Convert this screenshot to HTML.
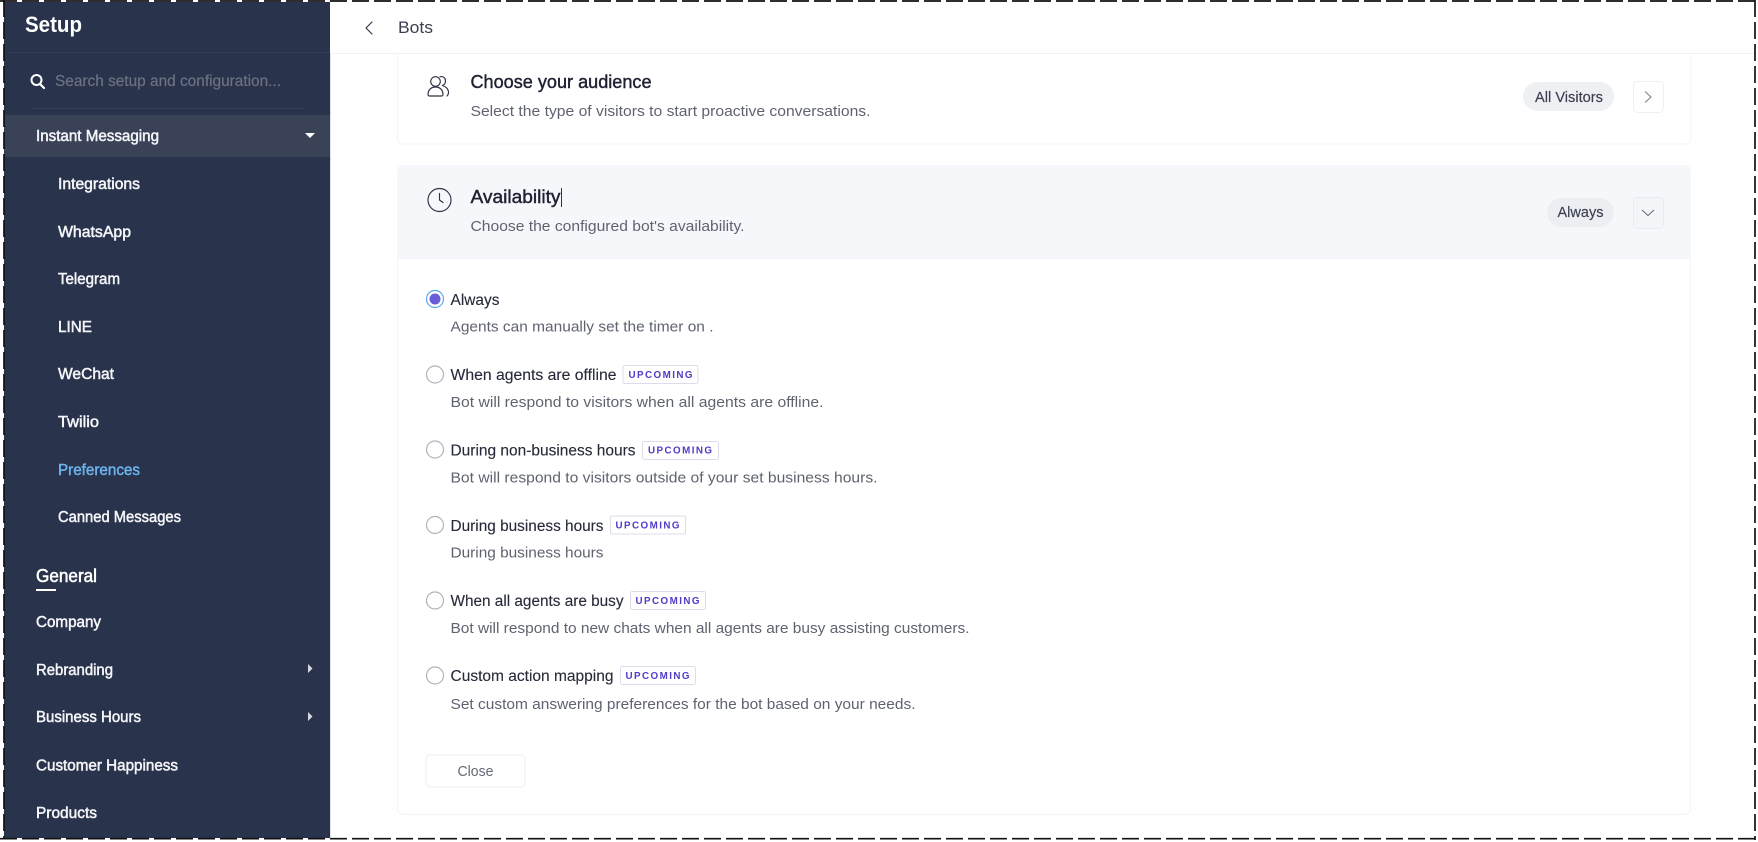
<!DOCTYPE html>
<html lang="en"><head><meta charset="utf-8"><title>Bots - Setup</title>
<style>
html,body{margin:0;padding:0;background:#fff;width:1758px;height:842px;overflow:hidden}
svg{display:block;filter:blur(.3px)}
text{font-family:"Liberation Sans",sans-serif}
.nav{fill:#f4f5f8;font-size:15.5px;stroke:#f4f5f8;stroke-width:.5px}
.lab{fill:#262a38;font-size:15.5px;stroke:#262a38;stroke-width:.12px}
.sub{fill:#5f6370;font-size:15px}
.ttl{fill:#1d2130;font-size:18px;stroke:#1d2130;stroke-width:.4px}
.pill{fill:#3a3e4e;font-size:14.5px;stroke:#3a3e4e;stroke-width:.15px}
.bdg{fill:#4f3cc9;font-size:9.8px;font-weight:700}
.ic{fill:none;stroke:#2e3242;stroke-width:1.15;stroke-linecap:round;stroke-linejoin:round}
.bb{fill:#fff;stroke:#dcdcea}
</style></head><body>
<svg width="1758" height="842" viewBox="0 0 1758 842" xmlns="http://www.w3.org/2000/svg">
<rect width="1758" height="842" fill="#fff"/>
<!-- sidebar -->
<rect x="4" y="2" width="326" height="836" fill="#2a334c"/>
<rect x="330" y="53" width="1" height="785" fill="#dfe2e8"/>
<rect x="4" y="52" width="326" height="1" fill="#313a53"/>
<text x="25" y="32" font-size="22" font-weight="700" fill="#fff" textLength="57" lengthAdjust="spacingAndGlyphs">Setup</text>
<circle cx="36.500" cy="80" r="5" fill="none" stroke="#fff" stroke-width="2"/><path d="M40 84l4 4" stroke="#fff" stroke-width="2.200" stroke-linecap="round"/>
<text x="55" y="86" font-size="15.500" fill="#6c7282" stroke="#6c7282" stroke-width=".2" textLength="226" lengthAdjust="spacingAndGlyphs">Search setup and configuration...</text>
<rect x="32" y="108" width="271" height="1" fill="#38415a"/>
<rect x="4" y="115" width="326" height="42" fill="#3a4257"/>
<text class="nav" x="36" y="141" textLength="123" lengthAdjust="spacingAndGlyphs">Instant Messaging</text>
<path d="M305 133h10l-5 5z" fill="#fff"/>
<text class="nav" x="58" y="189" textLength="82" lengthAdjust="spacingAndGlyphs">Integrations</text>
<text class="nav" x="58" y="237" textLength="73" lengthAdjust="spacingAndGlyphs">WhatsApp</text>
<text class="nav" x="58" y="284" textLength="62" lengthAdjust="spacingAndGlyphs">Telegram</text>
<text class="nav" x="58" y="332" textLength="34" lengthAdjust="spacingAndGlyphs">LINE</text>
<text class="nav" x="58" y="379" textLength="56" lengthAdjust="spacingAndGlyphs">WeChat</text>
<text class="nav" x="58" y="427" textLength="41" lengthAdjust="spacingAndGlyphs">Twilio</text>
<text x="58" y="475" font-size="15.500" fill="#6bb3ee" stroke="#6bb3ee" stroke-width=".45" textLength="82" lengthAdjust="spacingAndGlyphs">Preferences</text>
<text class="nav" x="58" y="522" textLength="123" lengthAdjust="spacingAndGlyphs">Canned Messages</text>
<text x="36" y="582" font-size="18" fill="#fff" stroke="#fff" stroke-width=".55" textLength="61" lengthAdjust="spacingAndGlyphs">General</text>
<rect x="36" y="589" width="20" height="2" fill="#fff"/>
<text class="nav" x="36" y="627" textLength="65" lengthAdjust="spacingAndGlyphs">Company</text>
<text class="nav" x="36" y="675" textLength="77" lengthAdjust="spacingAndGlyphs">Rebranding</text>
<text class="nav" x="36" y="722" textLength="105" lengthAdjust="spacingAndGlyphs">Business Hours</text>
<text class="nav" x="36" y="770.500" textLength="142" lengthAdjust="spacingAndGlyphs">Customer Happiness</text>
<text class="nav" x="36" y="818" textLength="61" lengthAdjust="spacingAndGlyphs">Products</text>
<path d="M308 664v9l4.500-4.500z" fill="#d5d8e0"/>
<path d="M308 712v9l4.500-4.500z" fill="#d5d8e0"/>
<!-- top bar -->
<rect x="331" y="53" width="1424" height="1" fill="#f0f2f6"/>
<path d="M372 22l-6 6 6 6" class="ic"/>
<text x="398" y="33" font-size="17" fill="#3a3e4e" textLength="35" lengthAdjust="spacingAndGlyphs">Bots</text>
<!-- card 1 -->
<path d="M397.500 54V138a6 6 0 0 0 6 6H1685a6 6 0 0 0 6-6V54" fill="#fff" stroke="#f3f4f8"/>
<g class="ic" transform="translate(427 76)">
<circle cx="8.500" cy="5.500" r="4.800"/>
<path d="M1 18.500c0-4.500 3-7.500 7.500-7.500s7.500 3 7.500 7.500c0 1-.8 1.500-1.800 1.500H2.800c-1 0-1.800-.5-1.800-1.500z"/>
<path d="M13 .8c3-.8 5.500 1.200 5.500 4.200 0 2.200-1.300 3.800-3 4.500 3.300 1 6 3.500 6 7 0 1.500-.7 2.800-1.500 3.500"/>
</g>
<text class="ttl" x="470.500" y="88" textLength="181" lengthAdjust="spacingAndGlyphs">Choose your audience</text>
<text class="sub" x="470.500" y="116" textLength="400" lengthAdjust="spacingAndGlyphs">Select the type of visitors to start proactive conversations.</text>
<rect x="1523" y="82" width="91" height="29" rx="14.500" fill="#eef0f4"/>
<text class="pill" x="1535" y="102" textLength="68" lengthAdjust="spacingAndGlyphs">All Visitors</text>
<rect x="1633.500" y="81.500" width="30" height="31" rx="4" fill="#fff" stroke="#eef0f5"/>
<path d="M1645 91.500l6 5.500-6 5.500" fill="none" stroke="#80848f" stroke-width="1.100"/>
<!-- card 2 -->
<rect x="397.500" y="165.500" width="1293" height="649" rx="6" fill="#fff" stroke="#f3f4f8"/>
<path d="M397 259V171a6 6 0 0 1 6-6H1685a6 6 0 0 1 6 6V259z" fill="#f6f7fb"/>
<rect x="397" y="258" width="1294" height="1" fill="#f2f3f7"/>
<g class="ic"><circle cx="439.500" cy="200" r="11.500"/><path d="M439.500 193.500v6.500l3.500 2.500"/></g>
<text class="ttl" x="470.500" y="203" textLength="90" lengthAdjust="spacingAndGlyphs">Availability</text>
<rect x="561" y="188" width="1" height="19" fill="#2e3242"/>
<text class="sub" x="470.500" y="231" textLength="274" lengthAdjust="spacingAndGlyphs">Choose the configured bot's availability.</text>
<rect x="1547" y="198" width="67" height="29" rx="14.500" fill="#eceef2"/>
<text class="pill" x="1557.500" y="217" textLength="46" lengthAdjust="spacingAndGlyphs">Always</text>
<rect x="1633.500" y="197.500" width="30" height="31" rx="4" fill="#f4f5f9" stroke="#e9ebf0"/>
<path d="M1642 210l6 5.500 6-5.500" fill="none" stroke="#6a6e7b" stroke-width="1.100"/>
<!-- options -->
<circle cx="435" cy="299" r="8.500" fill="#fff" stroke="#5aa7ee" stroke-width="1.200"/><circle cx="435" cy="299" r="5.500" fill="#6a5cd8"/>
<text class="lab" x="450.500" y="305" textLength="49" lengthAdjust="spacingAndGlyphs">Always</text>
<text class="sub" x="450.500" y="331.500" textLength="263" lengthAdjust="spacingAndGlyphs">Agents can manually set the timer on .</text>

<circle cx="435" cy="374.500" r="8.500" fill="#fff" stroke="#b0b3bc" stroke-width="1.200"/>
<text class="lab" x="450.500" y="380" textLength="166" lengthAdjust="spacingAndGlyphs">When agents are offline</text>
<rect class="bb" x="623" y="365.500" width="75" height="18" rx="2"/>
<text class="bdg" x="628.500" y="378" textLength="64" lengthAdjust="spacing">UPCOMING</text>
<text class="sub" x="450.500" y="407" textLength="373" lengthAdjust="spacingAndGlyphs">Bot will respond to visitors when all agents are offline.</text>

<circle cx="435" cy="449.500" r="8.500" fill="#fff" stroke="#b0b3bc" stroke-width="1.200"/>
<text class="lab" x="450.500" y="455.500" textLength="185" lengthAdjust="spacingAndGlyphs">During non-business hours</text>
<rect class="bb" x="642.500" y="441.500" width="76" height="18" rx="2"/>
<text class="bdg" x="648" y="453.500" textLength="64" lengthAdjust="spacing">UPCOMING</text>
<text class="sub" x="450.500" y="482.500" textLength="427" lengthAdjust="spacingAndGlyphs">Bot will respond to visitors outside of your set business hours.</text>

<circle cx="435" cy="525" r="8.500" fill="#fff" stroke="#b0b3bc" stroke-width="1.200"/>
<text class="lab" x="450.500" y="531" textLength="153" lengthAdjust="spacingAndGlyphs">During business hours</text>
<rect class="bb" x="610.500" y="516" width="75" height="18" rx="2"/>
<text class="bdg" x="615.500" y="528.500" textLength="64" lengthAdjust="spacing">UPCOMING</text>
<text class="sub" x="450.500" y="557.500" textLength="153" lengthAdjust="spacingAndGlyphs">During business hours</text>

<circle cx="435" cy="600.500" r="8.500" fill="#fff" stroke="#b0b3bc" stroke-width="1.200"/>
<text class="lab" x="450.500" y="606" textLength="173" lengthAdjust="spacingAndGlyphs">When all agents are busy</text>
<rect class="bb" x="630.500" y="591.500" width="75" height="18" rx="2"/>
<text class="bdg" x="635.500" y="604" textLength="64" lengthAdjust="spacing">UPCOMING</text>
<text class="sub" x="450.500" y="633" textLength="519" lengthAdjust="spacingAndGlyphs">Bot will respond to new chats when all agents are busy assisting customers.</text>

<circle cx="435" cy="675.500" r="8.500" fill="#fff" stroke="#b0b3bc" stroke-width="1.200"/>
<text class="lab" x="450.500" y="681" textLength="163" lengthAdjust="spacingAndGlyphs">Custom action mapping</text>
<rect class="bb" x="620.500" y="666.500" width="75" height="18" rx="2"/>
<text class="bdg" x="625.500" y="679" textLength="64" lengthAdjust="spacing">UPCOMING</text>
<text class="sub" x="450.500" y="709" textLength="465" lengthAdjust="spacingAndGlyphs">Set custom answering preferences for the bot based on your needs.</text>

<rect x="426" y="755" width="99" height="32" rx="4" fill="#fff" stroke="#eceef3"/>
<text x="457.500" y="776" font-size="14.500" fill="#666a76" textLength="36" lengthAdjust="spacingAndGlyphs">Close</text>
<!-- dashed frame -->
<g fill="none" stroke="#111" stroke-width="1.700" stroke-dasharray="17 5">
<path d="M0 1H1758"/><path d="M4 0V838"/><path d="M1755 0V840"/><path d="M0 838.700H1758"/>
</g>
</svg>
</body></html>
